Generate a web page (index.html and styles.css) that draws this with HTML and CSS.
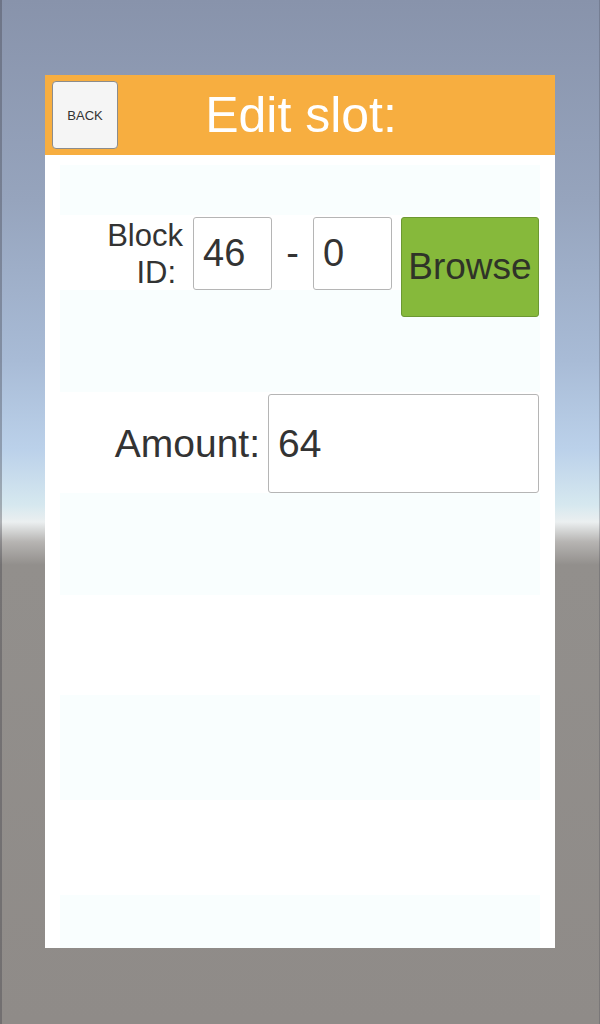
FILE: index.html
```html
<!DOCTYPE html>
<html lang="en">
<head>
  <meta charset="UTF-8" />
  <meta name="viewport" content="width=device-width, initial-scale=1" />
  <title>Edit slot</title>
  <link rel="stylesheet" href="styles.css">
</head>
<body>

<div class="panel">
  <header class="panel-header">
    <button class="back-btn">BACK</button>
    <h1>Edit slot:</h1>
  </header>

  <div class="rows">
    <div class="row stripe h-top"></div>

    <div class="row block-row">
      <label class="field-label block-label">
        <span>Block</span>
        <span class="second">ID:</span>
      </label>
      <input class="field small" type="text" value="46" />
      <span class="dash">-</span>
      <input class="field small" type="text" value="0" />
      <button class="browse-btn">Browse</button>
    </div>

    <div class="row stripe h102"></div>

    <div class="row amount-row">
      <label class="field-label amount-label">Amount:</label>
      <input class="field wide" type="text" value="64" />
    </div>

    <div class="row stripe h102"></div>
    <div class="row h100"></div>
    <div class="row stripe h105"></div>
    <div class="row h95"></div>
    <div class="row stripe fill"></div>
  </div>
</div>

</body>
</html>
```

FILE: styles.css
```css
* {
  margin: 0;
  padding: 0;
  box-sizing: border-box;
}

body {
  font-family: 'Liberation Sans', Arial, sans-serif;
  height: 1024px;
  overflow: hidden;
  color: #333;
  background: linear-gradient(to bottom,
    #8893ab 0px,
    #96a4bd 200px,
    #a8bbd6 360px,
    #bbd1ea 450px,
    #d6e8ef 505px,
    #ebeff0 522px,
    #b6b4b2 542px,
    #928f8c 565px,
    #8f8b88 1024px);
  box-shadow: inset 2px 0 0 rgba(60,60,70,0.35), inset -1px 0 0 rgba(60,60,70,0.25);
}

.panel {
  margin: 75px 45px 0;
  height: 873px;
  background-color: white;
  display: flex;
  flex-direction: column;
}

.panel-header {
  height: 80px;
  flex-shrink: 0;
  background-color: #f7ae40;
  display: grid;
  grid-template-columns: 1fr auto 1fr;
}

.back-btn {
  align-self: start;
  justify-self: start;
  width: 66px;
  height: 68px;
  margin: 6px 0 0 7px;
  background: #f5f5f5;
  border: 1px solid #8c8c8c;
  border-radius: 4px;
  font-family: inherit;
  font-size: 13px;
  color: #333;
  cursor: pointer;
}

.panel-header h1 {
  grid-column: 2;
  font-size: 50px;
  font-weight: normal;
  line-height: 80px;
  color: white;
  padding-left: 2px;
}

.rows {
  flex: 1;
  display: flex;
  flex-direction: column;
  padding: 10px 15px 0;
}

.row {
  flex-shrink: 0;
}

.stripe {
  background-color: #f9fefe;
}

.h-top { height: 50px; }
.h102 { height: 102px; }
.h100 { height: 100px; }
.h105 { height: 105px; }
.h95 { height: 95px; }
.fill { flex: 1; }

.block-row {
  height: 75px;
  display: flex;
  align-items: flex-start;
  padding-top: 2px;
  position: relative;
  z-index: 1;
}

.field-label {
  flex-shrink: 0;
  text-align: right;
  color: #333;
}

.block-label {
  width: 123px;
  margin-right: 10px;
  font-size: 31px;
  line-height: 37px;
}

.block-label span {
  display: block;
}

.block-label .second {
  padding-right: 7px;
}

.field {
  border: 1px solid #b5b5b5;
  border-radius: 3px;
  background: white;
  font-family: inherit;
  color: #333;
  padding: 0 9px;
  outline: none;
}

.field.small {
  width: 79px;
  height: 73px;
  font-size: 38px;
}

.dash {
  width: 41px;
  text-align: center;
  font-size: 38px;
  line-height: 73px;
  color: #333;
}

.browse-btn {
  width: 138px;
  height: 100px;
  margin-left: 9px;
  background-color: #86b93b;
  border: 1px solid #6c9832;
  border-radius: 3px;
  font-family: inherit;
  font-size: 37px;
  color: #2f3328;
  cursor: pointer;
}

.amount-row {
  height: 101px;
  display: flex;
  align-items: flex-start;
  padding-top: 2px;
}

.amount-label {
  width: 200px;
  margin-right: 8px;
  font-size: 39px;
  line-height: 99px;
}

.field.wide {
  width: 271px;
  height: 99px;
  font-size: 39px;
}
```
